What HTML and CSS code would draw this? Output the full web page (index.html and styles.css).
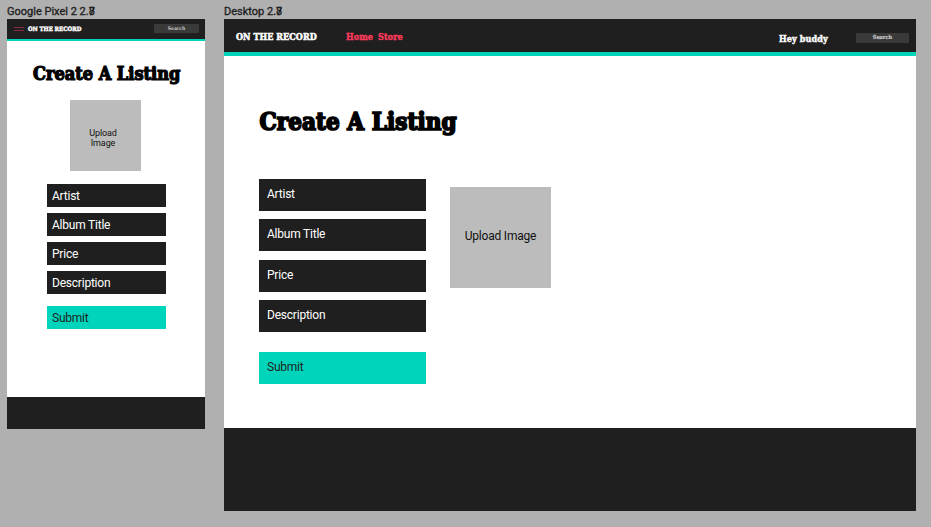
FILE: index.html
```html
<!DOCTYPE html>
<html lang="en">
<head>
<meta charset="utf-8">
<title>On The Record - Create A Listing</title>
<link rel="stylesheet" href="styles.css">
</head>
<body>
<main class="canvas">
  <section class="artboard phone">
    <h2 class="label">Google Pixel 2 2.<span class="digit">8</span></h2>
    <div class="screen">
      <header class="bar">
        <svg class="burger" viewBox="0 0 10 6"><path d="M0 1.5H10M0 4.5H10"/></svg>
        <span class="brand slab"><span>ON THE RECORD</span></span>
        <div class="search slab"><span>Search</span></div>
      </header>
      <div class="content">
        <h1 class="title slab"><span>Create A Listing</span></h1>
        <div class="upload">Upload<br>Image</div>
        <form class="form">
          <div class="field">Artist</div>
          <div class="field">Album Title</div>
          <div class="field price">Price</div>
          <div class="field">Description</div>
          <div class="field submit">Submit</div>
        </form>
      </div>
      <footer class="footer"></footer>
    </div>
  </section>
  <section class="artboard desktop">
    <h2 class="label">Desktop 2.<span class="digit">8</span></h2>
    <div class="screen">
      <header class="bar">
        <span class="brand slab"><span>ON THE RECORD</span></span>
        <nav class="nav">
          <span class="home slab"><span>Home</span></span>
          <span class="store slab"><span>Store</span></span>
        </nav>
        <span class="user slab"><span>Hey buddy</span></span>
        <div class="search slab"><span>Search</span></div>
      </header>
      <div class="content">
        <h1 class="title slab"><span>Create A Listing</span></h1>
        <div class="columns">
          <form class="form">
            <div class="field">Artist</div>
            <div class="field">Album Title</div>
            <div class="field price">Price</div>
            <div class="field">Description</div>
            <div class="field submit">Submit</div>
          </form>
          <div class="upload">Upload Image</div>
        </div>
      </div>
      <footer class="footer"></footer>
    </div>
  </section>
</main>
</body>
</html>
```
FILE: styles.css
```css
* { box-sizing: border-box; }
body {
  margin: 0;
  background: #b0b0b0;
  font-family: Roboto, "Liberation Sans", sans-serif;
  color: #1f1f1f;
}
.canvas {
  display: flex;
  gap: 19px;
  width: 931px;
  height: 527px;
  padding: 3px 0 0 7px;
  overflow: hidden;
}
.artboard { flex: none; }
.phone { width: 198px; }
.desktop { width: 692px; }
.label {
  margin: 0;
  height: 16px;
  font-size: 11px;
  line-height: 17px;
  font-weight: 400;
  -webkit-text-stroke: 0.35px #1f1f1f;
  white-space: nowrap;
}
.digit { position: relative; }
.digit::after {
  content: "7";
  position: absolute;
  left: 0;
  top: -2px;
}
.screen {
  display: flex;
  flex-direction: column;
  background: #fff;
}
.phone .screen { height: 410px; }
.desktop .screen { height: 492px; }
.bar {
  display: flex;
  flex: none;
  background: #1f1f1f;
  border-bottom: solid #00d5bb;
  color: #fff;
}
.phone .bar { height: 22px; border-bottom-width: 2px; padding-left: 7px; }
.desktop .bar { height: 37px; border-bottom-width: 4px; padding-left: 12px; }
.content { flex: 1; }
.footer { flex: none; background: #1f1f1f; }
.phone .footer { height: 32px; }
.desktop .footer { height: 83px; }

/* Slab lettering: narrow, very heavy serif */
.slab {
  display: block;
  font-family: "DejaVu Serif Condensed", "DejaVu Serif", serif;
  font-stretch: condensed;
  font-weight: 700;
  white-space: nowrap;
}

.burger { width: 10px; height: 6px; margin-top: 7px; }
.burger path { stroke: #8b2a40; stroke-width: 1; fill: none; }
.phone .brand { width: 126px; margin: 4px 0 0 4px; font-size: 6px; line-height: 12px; -webkit-text-stroke: 0.4px; }
.desktop .brand { width: 110px; margin-top: 9px; font-size: 9px; line-height: 18px; letter-spacing: 0.05px; -webkit-text-stroke: 0.5px; }
.search { background: #3a3a3a; color: #c6c6c6; text-align: center; }
.phone .search { width: 45px; height: 9px; margin-top: 5px; font-size: 5px; line-height: 9px; }
.desktop .search { width: 53px; height: 10px; margin-top: 14px; font-size: 5.6px; line-height: 9px; -webkit-text-stroke: 0.2px; }
.nav { display: flex; width: 433px; margin-top: 9px; color: #ff3b5c; font-size: 9px; line-height: 18px; letter-spacing: 0.08px; -webkit-text-stroke: 0.4px; }
.home { width: 32px; }
.user { width: 77px; margin-top: 11px; font-size: 9px; line-height: 18px; letter-spacing: 0.1px; -webkit-text-stroke: 0.4px; }

.title { margin: 0; color: #000; }
.phone .title { padding: 21px 0 0 26px; height: 59px; font-size: 18px; line-height: 23px; -webkit-text-stroke: 1.2px; }
.desktop .title { padding: 50px 0 0 35.5px; height: 123px; font-size: 24px; line-height: 31px; letter-spacing: 0.05px; -webkit-text-stroke: 1.7px; }

.upload { background: #bcbcbc; color: #111; text-align: center; }
.phone .upload { width: 71px; height: 71px; margin-left: 63px; padding: 28px 5px 0 0; font-size: 9px; line-height: 10px; letter-spacing: -0.1px; }
.desktop .upload { width: 101px; height: 101px; margin: 8px 0 0 24px; font-size: 12px; line-height: 98px; letter-spacing: -0.2px; }
.columns { display: flex; align-items: flex-start; margin-left: 35px; }
.form { display: flex; flex-direction: column; }
.field { background: #1f1f1f; color: #fff; letter-spacing: -0.22px; }
.submit { background: #00d5bb; color: #1f1f1f; }
.phone .form { width: 119px; margin: 13px 0 0 40px; gap: 6px; }
.phone .field { height: 23px; padding-left: 5px; font-size: 12px; line-height: 25px; }
.phone .submit { margin-top: 6px; }
.desktop .form { width: 167px; gap: 8px; }
.desktop .field { height: 32px; padding-left: 8px; font-size: 12px; line-height: 30px; }
.desktop .price { margin-top: 1px; }
.desktop .submit { margin-top: 12px; }
```
